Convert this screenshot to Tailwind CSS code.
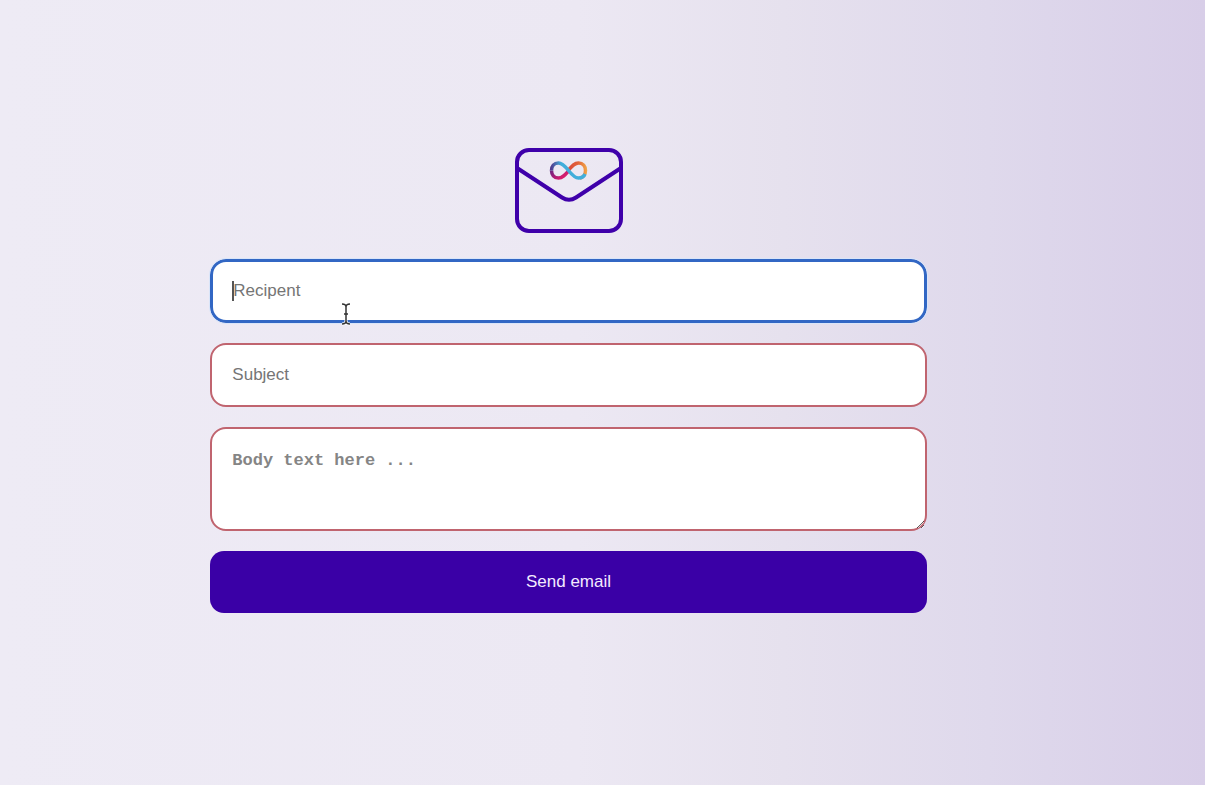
<!DOCTYPE html>
<html lang="en">
<head>
<meta charset="utf-8">
<meta name="viewport" content="width=device-width, initial-scale=1">
<title>Send email</title>
<script src="https://cdn.jsdelivr.net/npm/@tailwindcss/browser@4"></script>
</head>
<body class="min-h-screen bg-[linear-gradient(90deg,#eeebf5_0%,#ece8f3_48%,#e6e1ee_65%,#dfd9ec_82%,#d8cee8_100%)] font-['Liberation_Sans',Arial,sans-serif] text-[17px]">
<main class="flex min-h-screen flex-col items-center justify-center pr-[68px] pb-[26px]">
  <svg class="mb-[25px] h-[88px] w-[110px]" viewBox="0 0 110 88" fill="none" role="img" aria-label="Mail logo">
    <defs>
      <linearGradient id="warm" gradientUnits="userSpaceOnUse" x1="54" y1="0" x2="74" y2="0"><stop offset="0" stop-color="#d94a3c"/><stop offset=".5" stop-color="#e2633a"/><stop offset="1" stop-color="#f3b04a"/></linearGradient>
      <linearGradient id="plum" gradientUnits="userSpaceOnUse" x1="37" y1="18" x2="48" y2="31"><stop offset="0" stop-color="#50308a"/><stop offset=".5" stop-color="#8a1f7c"/><stop offset="1" stop-color="#d51d6d"/></linearGradient>
      <linearGradient id="sky" gradientUnits="userSpaceOnUse" x1="37" y1="0" x2="47" y2="0"><stop offset="0" stop-color="#50388c"/><stop offset="1" stop-color="#41aedb"/></linearGradient>
    </defs>
    <rect x="3" y="4" width="104" height="81" rx="12" stroke="#3f00aa" stroke-width="4"/>
    <path d="M3 22 48 51.500Q55 56 62 51.500L107 22" stroke="#3f00aa" stroke-width="4"/>
    <g stroke-width="3.500">
      <path d="M54.500 24C58 20 60.500 17 64.500 17C69 17 71.500 20.500 71.500 24.500C71.500 28.500 69 31.500 66 32" stroke="url(#warm)"/>
      <path d="M37.500 24.500C37.500 28.500 40 32 44.500 32C48.500 32 51 29 54.500 25" stroke="url(#plum)"/>
      <path d="M37.500 24.500C37.500 20.500 40 17 44.500 17C52.500 17 56.500 32 64.500 32C68 32 70 30.500 71 28" stroke="url(#sky)"/>
    </g>
  </svg>
  <form class="flex w-[63%] flex-col gap-5">
    <div class="relative">
      <input type="text" aria-label="Recipent" placeholder="Recipent" class="block h-16 w-full rounded-2xl border-3 border-[#3267c4] bg-white px-5 text-[17px] placeholder-[#757575] caret-transparent outline-1 outline-[#d9e5f9]">
      <span class="absolute top-[22px] left-[22px] h-5 w-0.5 bg-[#555555]"></span>
      <svg class="absolute top-[43px] left-[130px] h-6 w-3" viewBox="0 0 12 24" fill="none" aria-hidden="true">
        <path d="M2 2C5 2 6 3 6 5C6 3 7 2 10 2M6 5V19M4 12H8M2 22C5 22 6 21 6 19C6 21 7 22 10 22" stroke="#ffffff" stroke-width="3"/>
        <path d="M2 2C5 2 6 3 6 5C6 3 7 2 10 2M6 5V19M4 12H8M2 22C5 22 6 21 6 19C6 21 7 22 10 22" stroke="#333333" stroke-width="1.500"/>
      </svg>
    </div>
    <input type="text" aria-label="Subject" placeholder="Subject" class="block h-16 w-full rounded-2xl border-2 border-[#c0646f] bg-white px-5 text-[17px] placeholder-[#757575]">
    <textarea aria-label="Body" placeholder="Body text here ..." class="block h-[104px] w-full resize-y rounded-2xl border-2 border-[#c0646f] bg-white px-5 py-[22px] font-['Liberation_Mono',monospace] text-[17px] leading-5 font-bold placeholder-[#858585]"></textarea>
    <button type="submit" class="h-[62px] w-full rounded-[14px] bg-[#3a00a6] text-[17px] text-[#f3ebff]">Send email</button>
  </form>
</main>
</body>
</html>
